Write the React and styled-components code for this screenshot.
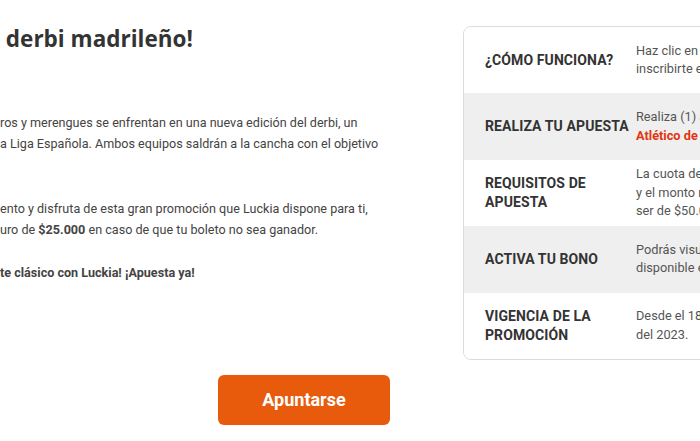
import styled, { createGlobalStyle } from "styled-components";

const GlobalStyle = createGlobalStyle`
  html, body {
    margin: 0;
    padding: 0;
    background: #fff;
    overflow: hidden;
  }
  body {
    width: 700px;
    height: 441px;
    font-family: Roboto, "Liberation Sans", sans-serif;
  }
`;

const Page = styled.div`
  display: flex;
  flex-direction: column;
  width: 700px;
  height: 441px;
  overflow: hidden;
`;

const Top = styled.div`
  display: flex;
  align-items: flex-start;
`;

const Intro = styled.div`
  width: 463px;
  flex-shrink: 0;
  padding-top: 22px;
`;

const Title = styled.h1`
  margin: 0;
  font-family: "Open Sans", sans-serif;
  font-weight: 700;
  font-size: 22.5px;
  line-height: 34px;
  color: #333;
  white-space: pre;
`;

const Text = styled.p`
  margin: ${(p) => p.$top || 0}px 0 0;
  font-size: 12.6px;
  line-height: 21px;
  color: #444;
  white-space: nowrap;
  font-weight: ${(p) => (p.$bold ? 700 : 400)};

  b {
    font-weight: 700;
  }
`;

const Card = styled.div`
  margin-top: 26px;
  width: 320px;
  flex-shrink: 0;
  border: 1px solid #dcdcdc;
  border-radius: 8px;
  overflow: hidden;
`;

const Row = styled.div`
  display: flex;
  align-items: center;
  height: 66.4px;
  background: ${(p) => (p.$shade ? "#efefef" : "#fff")};
`;

const Label = styled.div`
  width: 151px;
  padding-left: 21px;
  flex-shrink: 0;
  font-weight: 700;
  font-size: 14px;
  line-height: 19px;
  letter-spacing: 0.1px;
  color: #333;
  text-transform: uppercase;
`;

const Info = styled.div`
  font-size: 12.75px;
  line-height: 18.5px;
  color: #555;
  white-space: nowrap;
`;

const Hot = styled.span`
  color: #e3340f;
  font-weight: 700;
`;

const Footer = styled.div`
  padding-left: 218px;
  padding-top: 15px;
`;

const Button = styled.button`
  width: 172px;
  height: 50px;
  border: none;
  border-radius: 6px;
  background: #e85a0c;
  color: #fff;
  font-family: Roboto, sans-serif;
  font-weight: 700;
  font-size: 18px;
  cursor: pointer;
`;

const rows = [
  {
    label: "¿Cómo funciona?",
    info: (
      <>
        Haz clic en el botón Apuntarse para
        <br />
        inscribirte en la promoción.
      </>
    ),
  },
  {
    label: "Realiza tu apuesta",
    info: (
      <>
        Realiza (1) apuesta al ganador del partido
        <br />
        <Hot>Atlético de Madrid vs Real Madrid</Hot>
      </>
    ),
  },
  {
    label: (
      <>
        Requisitos de
        <br />
        apuesta
      </>
    ),
    info: (
      <>
        La cuota debe ser mínima de 1.50
        <br />
        y el monto mínimo de la apuesta debe
        <br />
        ser de $50.000
      </>
    ),
  },
  {
    label: "Activa tu bono",
    info: (
      <>
        Podrás visualizar tu bono
        <br />
        disponible en tu cuenta.
      </>
    ),
  },
  {
    label: (
      <>
        Vigencia de la
        <br />
        promoción
      </>
    ),
    info: (
      <>
        Desde el 18 de marzo hasta el 20 de marzo
        <br />
        del 2023.
      </>
    ),
  },
];

export default function App() {
  return (
    <>
      <GlobalStyle />
      <Page>
        <Top>
          <Intro>
            <Title>{" derbi madrileño!"}</Title>
            <Text $top={56}>
              ros y merengues se enfrentan en una nueva edición del derbi, un
              <br />
              a Liga Española. Ambos equipos saldrán a la cancha con el objetivo
            </Text>
            <Text $top={44}>
              ento y disfruta de esta gran promoción que Luckia dispone para ti,
              <br />
              uro de <b>$25.000</b> en caso de que tu boleto no sea ganador.
            </Text>
            <Text $top={22} $bold>
              te clásico con Luckia! ¡Apuesta ya!
            </Text>
          </Intro>
          <Card>
            {rows.map((r, i) => (
              <Row key={i} $shade={i % 2 === 1}>
                <Label>{r.label}</Label>
                <Info>{r.info}</Info>
              </Row>
            ))}
          </Card>
        </Top>
        <Footer>
          <Button>Apuntarse</Button>
        </Footer>
      </Page>
    </>
  );
}
